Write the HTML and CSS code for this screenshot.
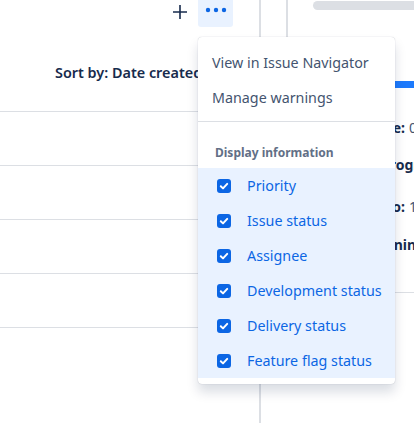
FILE: index.html
```html
<!DOCTYPE html>
<html lang="en">
<head>
    <meta charset="UTF-8">
    <meta name="viewport" content="width=device-width, initial-scale=1.0">
    <title>Board list</title>
    <link rel="stylesheet" href="styles.css">
</head>
<body>
    <div class="container">
        <div class="list-panel">
            <div class="toolbar">
                <button class="icon-btn" aria-label="Create">
                    <svg width="16" height="16" viewBox="0 0 16 16"><path d="M8 1v14M1 8h14" stroke="#172b4d" stroke-width="1.6" fill="none"/></svg>
                </button>
                <button class="more-btn" aria-label="More">
                    <svg width="34" height="8" viewBox="0 0 34 8"><circle cx="9" cy="4" r="2.2" fill="#0c66e4"/><circle cx="17" cy="4" r="2.2" fill="#0c66e4"/><circle cx="25" cy="4" r="2.2" fill="#0c66e4"/></svg>
                </button>
            </div>
            <div class="sort-row">Sort by: Date created</div>
            <div class="list-row"></div>
            <div class="list-row"></div>
            <div class="list-row"></div>
            <div class="list-row"></div>
        </div>
        <div class="gutter"></div>
        <div class="detail-panel">
            <div class="skeleton"></div>
            <div class="progress"></div>
            <div class="summary">
                <div class="summary-line first"><span class="summary-key">Due date:</span><span class="summary-val">01/02</span></div>
                <div class="summary-title second">Your progress</div>
                <div class="summary-line third"><span class="summary-key">To do:</span><span class="summary-val">1</span></div>
                <div class="summary-title fourth">Remaining</div>
            </div>
            <div class="divider"></div>
        </div>
    </div>

    <div class="dropdown">
        <div class="menu-group">
            <div class="menu-item">View in Issue Navigator</div>
            <div class="menu-item">Manage warnings</div>
        </div>
        <div class="menu-group sep">
            <div class="menu-heading">Display information</div>
            <div class="check-list">
                <div class="check-item"><span class="checkbox"><svg width="14" height="14" viewBox="0 0 14 14"><rect width="14" height="14" rx="3" fill="#0c66e4"/><path d="M3.8 7.3l2.2 2.1 4.2-4.5" stroke="#fff" stroke-width="2" fill="none" stroke-linecap="round" stroke-linejoin="round"/></svg></span>Priority</div>
                <div class="check-item"><span class="checkbox"><svg width="14" height="14" viewBox="0 0 14 14"><rect width="14" height="14" rx="3" fill="#0c66e4"/><path d="M3.8 7.3l2.2 2.1 4.2-4.5" stroke="#fff" stroke-width="2" fill="none" stroke-linecap="round" stroke-linejoin="round"/></svg></span>Issue status</div>
                <div class="check-item"><span class="checkbox"><svg width="14" height="14" viewBox="0 0 14 14"><rect width="14" height="14" rx="3" fill="#0c66e4"/><path d="M3.8 7.3l2.2 2.1 4.2-4.5" stroke="#fff" stroke-width="2" fill="none" stroke-linecap="round" stroke-linejoin="round"/></svg></span>Assignee</div>
                <div class="check-item"><span class="checkbox"><svg width="14" height="14" viewBox="0 0 14 14"><rect width="14" height="14" rx="3" fill="#0c66e4"/><path d="M3.8 7.3l2.2 2.1 4.2-4.5" stroke="#fff" stroke-width="2" fill="none" stroke-linecap="round" stroke-linejoin="round"/></svg></span>Development status</div>
                <div class="check-item"><span class="checkbox"><svg width="14" height="14" viewBox="0 0 14 14"><rect width="14" height="14" rx="3" fill="#0c66e4"/><path d="M3.8 7.3l2.2 2.1 4.2-4.5" stroke="#fff" stroke-width="2" fill="none" stroke-linecap="round" stroke-linejoin="round"/></svg></span>Delivery status</div>
                <div class="check-item"><span class="checkbox"><svg width="14" height="14" viewBox="0 0 14 14"><rect width="14" height="14" rx="3" fill="#0c66e4"/><path d="M3.8 7.3l2.2 2.1 4.2-4.5" stroke="#fff" stroke-width="2" fill="none" stroke-linecap="round" stroke-linejoin="round"/></svg></span>Feature flag status</div>
            </div>
        </div>
    </div>
</body>
</html>
```

FILE: styles.css
```css
body {
    font-family: "Noto Sans", "Open Sans", sans-serif;
    font-size: 14px;
    margin: 0;
    padding: 0;
    background-color: #ffffff;
    color: #172b4d;
    overflow: hidden;
}
.container {
    display: flex;
    height: 423px;
}
.list-panel {
    width: 259px;
    flex-shrink: 0;
    border-right: 2px solid #dcdfe4;
}
.toolbar {
    display: flex;
    justify-content: flex-end;
    align-items: center;
    gap: 6px;
    margin-top: -7px;
    height: 34px;
    padding-right: 26px;
}
.icon-btn {
    background: none;
    border: none;
    padding: 0;
    width: 24px;
    height: 24px;
    display: flex;
    align-items: center;
    justify-content: center;
    margin-top: 4px;
}
.more-btn {
    background-color: #e9f2ff;
    border: none;
    border-radius: 3px;
    padding: 0;
    width: 35px;
    height: 34px;
    display: flex;
    align-items: center;
    justify-content: center;
}
.sort-row {
    padding: 36px 0 28px 55px;
    font-size: 14.4px;
    line-height: 20px;
    font-weight: 600;
    white-space: nowrap;
    border-bottom: 1px solid #dcdfe4;
}
.list-row {
    height: 53px;
    border-bottom: 1px solid #dcdfe4;
}
.gutter {
    width: 25px;
    flex-shrink: 0;
    height: 120px;
    border-right: 2px solid #dcdfe4;
}
.detail-panel {
    flex-grow: 1;
    overflow: hidden;
    padding-top: 1px;
}
.skeleton {
    height: 9px;
    margin-left: 25px;
    width: 200px;
    background-color: #dcdfe4;
    border-radius: 5px;
}
.progress {
    height: 7px;
    margin-top: 71px;
    margin-left: 25px;
    width: 200px;
    background-color: #1d7afc;
}
.summary {
    padding-left: 30px;
    line-height: 20px;
    white-space: nowrap;
}
.summary-line {
    display: flex;
    gap: 4px;
}
.summary-key {
    width: 87px;
    flex-shrink: 0;
    text-align: right;
    font-weight: 700;
}
.summary-val {
    color: #44546f;
}
.summary-title {
    font-weight: 700;
}
.first { margin-top: 30px; }
.second { margin-top: 17px; padding-left: 27px; }
.third { margin-top: 22px; }
.fourth { margin-top: 18px; padding-left: 32px; }
.divider {
    margin-top: 37px;
    border-top: 1px solid #dcdfe4;
}
.dropdown {
    position: absolute;
    left: 198px;
    top: 37px;
    width: 197px;
    background-color: #ffffff;
    border-radius: 4px;
    box-shadow: 0 8px 12px rgba(9, 30, 66, 0.15), 0 0 1px rgba(9, 30, 66, 0.31);
    padding-bottom: 6px;
    overflow: hidden;
    font-size: 14.3px;
}
.menu-group {
    padding: 8px 0 6px;
}
.menu-group.sep {
    padding: 0;
    border-top: 1px solid #dcdfe4;
}
.menu-item {
    height: 35px;
    line-height: 35px;
    padding-left: 14px;
    color: #44546f;
    white-space: nowrap;
}
.menu-heading {
    padding: 23px 0 7px 17px;
    font-size: 12px;
    line-height: 16px;
    font-weight: 700;
    color: #626f86;
}
.check-list {
    background-color: #e9f2ff;
}
.check-item {
    display: flex;
    align-items: center;
    height: 35px;
    padding-left: 19px;
    gap: 16px;
    color: #0c66e4;
    white-space: nowrap;
}
.checkbox {
    display: flex;
    width: 14px;
    height: 14px;
}
```
